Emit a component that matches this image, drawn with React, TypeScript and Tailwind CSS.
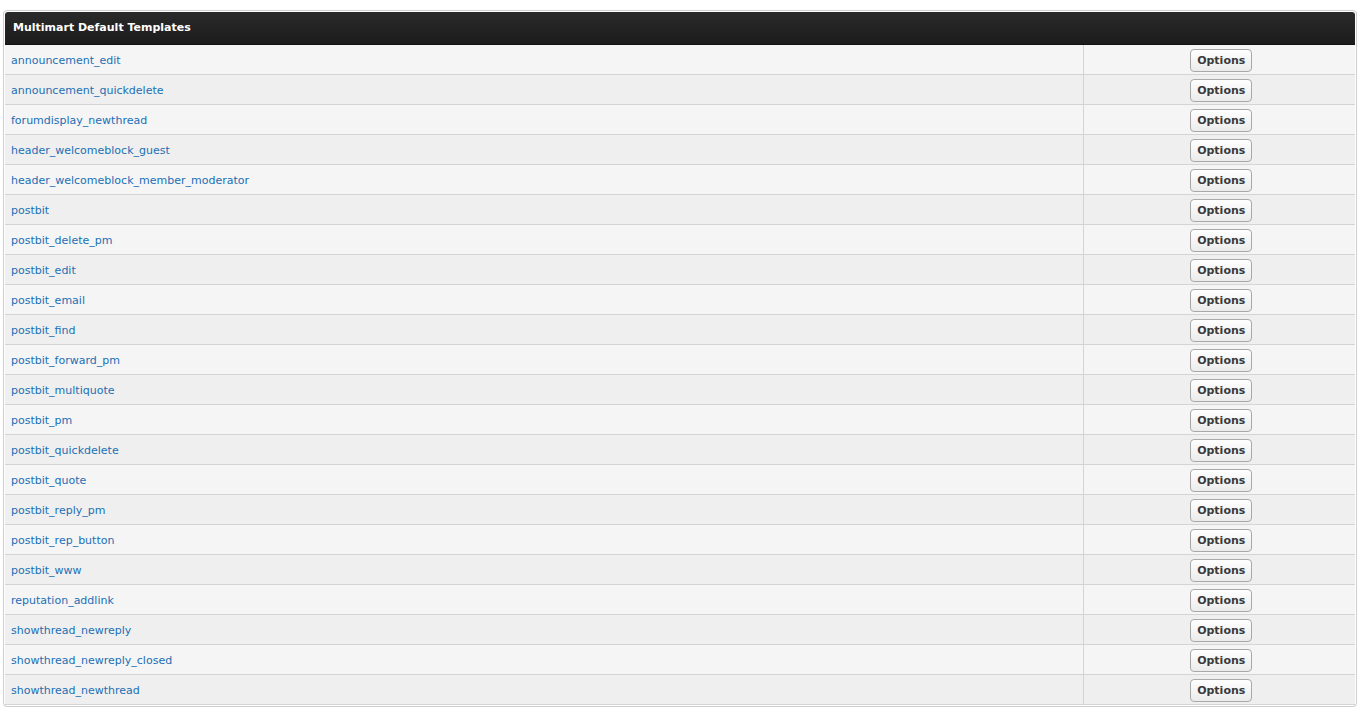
const templates = [
  'announcement_edit',
  'announcement_quickdelete',
  'forumdisplay_newthread',
  'header_welcomeblock_guest',
  'header_welcomeblock_member_moderator',
  'postbit',
  'postbit_delete_pm',
  'postbit_edit',
  'postbit_email',
  'postbit_find',
  'postbit_forward_pm',
  'postbit_multiquote',
  'postbit_pm',
  'postbit_quickdelete',
  'postbit_quote',
  'postbit_reply_pm',
  'postbit_rep_button',
  'postbit_www',
  'reputation_addlink',
  'showthread_newreply',
  'showthread_newreply_closed',
  'showthread_newthread',
]

export default function App() {
  return (
    <div className="min-h-screen w-[1369px] bg-white px-[3px] pt-[10px] font-['DejaVu_Sans',sans-serif]">
      <div className="w-[1354px] rounded-[4px] border border-[#cfcfcf] bg-white p-px shadow-[0_0_1px_rgba(0,0,0,0.1)]">
        <table className="w-full border-collapse">
          <thead>
            <tr>
              <th
                colSpan={2}
                className="h-[32px] rounded-t-[3px] border-b border-[#111] bg-gradient-to-b from-[#2a2a2a] to-[#1c1c1c] pl-[8px] pt-px text-left text-[11px] font-bold text-white"
              >
                Multimart Default Templates
              </th>
            </tr>
          </thead>
          <tbody>
            {templates.map((t, i) => (
              <tr key={t} className={i % 2 === 0 ? 'bg-[#f5f5f5]' : 'bg-[#efefef]'}>
                <td className="h-[30px] border-b border-r border-[#d4d4d4] pl-[6px] pt-[5px] align-middle text-[11px] text-[#1a6fb5]">
                  <a href="#" className="hover:underline">{t}</a>
                </td>
                <td className="w-[272px] border-b border-[#d4d4d4] pl-[4px] pt-px text-center align-middle">
                  <button className="h-[23px] w-[62px] rounded-[4px] border border-[#a8a8a8] bg-gradient-to-b from-white to-[#ebebeb] pt-px text-[11px] font-bold text-[#3a3a3a]">
                    Options
                  </button>
                </td>
              </tr>
            ))}
          </tbody>
        </table>
      </div>
    </div>
  )
}
